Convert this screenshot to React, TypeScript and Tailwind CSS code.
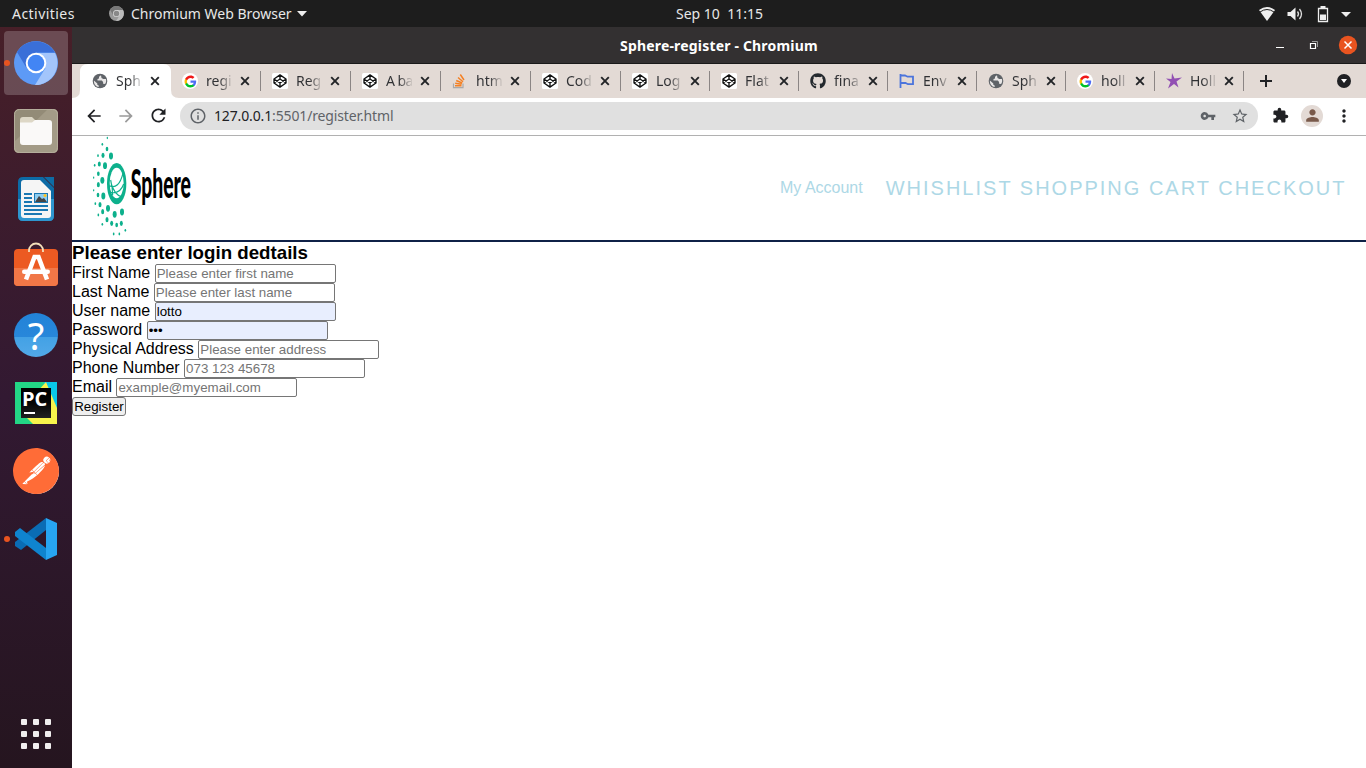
import React from "react";
import { MdArrowBack, MdArrowForward, MdRefresh, MdInfoOutline, MdVpnKey, MdStarBorder, MdExtension, MdPerson, MdMoreVert, MdAdd } from "react-icons/md";
import { FaGithub } from "react-icons/fa";
import { SiPostman } from "react-icons/si";

const ui = "font-['Noto_Sans','Liberation_Sans',sans-serif]";

const Chromium = ({ size, grey }: { size: number; grey?: boolean }) => {
  const c = grey ? ["#777", "#999", "#bbb", "#888"] : ["#3a6fd8", "#5d9af6", "#a3c5fb", "#4285f4"];
  return (
    <svg width={size} height={size} viewBox="0 0 44 44">
      <circle cx="22" cy="22" r="22" fill={c[1]} />
      <path d="M3 11A22 22 0 0 1 41 11.5H22L12.5 27Z" fill={c[0]} />
      <path d="M22 12H41A22 22 0 0 1 21 44L31.5 27Z" fill={c[2]} />
      <circle cx="22" cy="22" r="10.3" fill={grey ? "#ddd" : "#fff"} />
      <circle cx="22" cy="22" r="8.3" fill={c[3]} />
    </svg>
  );
};

const Google = () => (
  <span className="flex size-4 items-center justify-center rounded-full bg-white">
    <svg width="13" height="13" viewBox="0 0 24 24">
      <path fill="#4e6cf5" d="M22.5 12.2c0-.8-.1-1.500-.2-2.200H12v4.300h5.900c-.3 1.400-1 2.500-2.200 3.300v2.800h3.600c2-1.900 3.200-4.700 3.200-8.200z" />
      <path fill="#00c12b" d="M12 23c3 0 5.500-1 7.300-2.700l-3.600-2.800c-1 .7-2.200 1.100-3.700 1.100-2.900 0-5.300-1.900-6.200-4.500H2.200v2.800C4 20.500 7.700 23 12 23z" />
      <path fill="#fbbc05" d="M5.800 14.100c-.2-.7-.4-1.400-.4-2.100s.1-1.400.4-2.100V7.100H2.200C1.400 8.600 1 10.200 1 12s.4 3.400 1.200 4.900z" />
      <path fill="#f01818" d="M12 5.400c1.600 0 3.100.6 4.200 1.600l3.200-3.200C17.500 2.100 15 1 12 1 7.700 1 4 3.500 2.200 7.100l3.600 2.800C6.700 7.300 9.100 5.400 12 5.400z" />
    </svg>
  </span>
);

const Codepen = () => (
  <svg width="16" height="16" viewBox="0 0 16 16" fill="none" stroke="#111" strokeWidth="1.350" strokeLinejoin="round">
    <rect width="16" height="16" rx="1.500" fill="#fff" stroke="none" />
    <path d="M8 1.900 14 6v4l-6 4.100L2 10V6zM8 1.900V6M8 10v4.100M2 6l6 4 6-4M2 10l6-4 6 4" />
  </svg>
);

const Stack = () => (
  <svg width="16" height="16" viewBox="0 0 16 16" fill="none">
    <path d="M1.500 10.500v4.200h9.500v-4.200" stroke="#a9a9a9" strokeWidth="1.200" />
    <path d="M3 12.700h6.500M3.200 10.200l6.400 1M4.200 7.500l6 2.500M6 4.500l5 4.200M8.300 1.500l3.700 5.500" stroke="#f48024" strokeWidth="1.500" />
  </svg>
);

const Flag = () => (
  <svg width="16" height="16" viewBox="0 0 16 16" fill="none" stroke="#4b74dc" strokeWidth="1.800">
    <path d="M1.500 1v14M1.500 2.500h4.500l2.500 1.200h5.500v7.500h-5l-2.500-1.200h-5" />
  </svg>
);

const Star = () => (
  <svg width="16" height="16" viewBox="0 0 16 16" fill="#9250b3">
    <path d="M6 0 8.500 5.500 16 4.500 10.500 8.500 12.500 14.500 8 11 2 15.500 4.500 9 0 5.500 5.500 6z" />
  </svg>
);

const Globe = () => (
  <svg width="16" height="16" viewBox="0 0 16 16">
    <circle cx="8" cy="8" r="7.300" fill="#5f6368" />
    <path d="M9 2.300 7 3.700v1.800L5.500 6v1.600h4.300l1.300 1.500v1.600l2 .2c1.200-1.500 1.300-3.400.8-5L11.300 6 9.500 4.900zM1.900 7.400l3.400 3.100v1.300l1.400.7v1.400C4 13.600 1.700 11.300 1.900 7.400z" fill="#e8e6e6" />
  </svg>
);

const tabs: { t: string; icon: React.ReactNode }[] = [
  { t: "Sph", icon: <Globe /> },
  { t: "regi", icon: <Google /> },
  { t: "Reg", icon: <Codepen /> },
  { t: "A ba", icon: <Codepen /> },
  { t: "htm", icon: <Stack /> },
  { t: "Cod", icon: <Codepen /> },
  { t: "Log", icon: <Codepen /> },
  { t: "Flat", icon: <Codepen /> },
  { t: "fina", icon: <FaGithub className="size-4 text-[#24292e]" /> },
  { t: "Env", icon: <Flag /> },
  { t: "Sph", icon: <Globe /> },
  { t: "holl", icon: <Google /> },
  { t: "Holl", icon: <Star /> },
];

const Tab = ({ t, icon, i }: { t: string; icon: React.ReactNode; i: number }) => (
  <div className={`relative flex h-[34px] shrink-0 items-center pl-3 ${i < 6 ? "w-[90px]" : "w-[89px]"}`}>
    {i === 0 && (
      <svg className="absolute -left-2 top-0" width="108" height="34">
        <path d="M0 34Q8 34 8 26V8Q8 0 16 0H91Q99 0 99 8V26Q99 34 107 34Z" fill="#fff" />
      </svg>
    )}
    <span className="relative flex size-4 items-center justify-center">{icon}</span>
    <span className={`relative ml-2 w-[26px] overflow-hidden whitespace-nowrap bg-gradient-to-r from-[#303134] from-50% to-[#303134]/10 bg-clip-text text-[14px] leading-5 text-transparent ${t === "A ba" ? "tracking-[-0.6px]" : ""}`}>{t}</span>
    <svg className="relative ml-[8px]" width="10" height="10" viewBox="0 0 10 10" stroke="#222427" strokeWidth="1.900">
      <path d="m1.200 1.200 7.600 7.600m0-7.600-7.600 7.600" />
    </svg>
    {i > 0 && <span className="absolute -right-px top-[7px] h-[20px] w-px bg-[#8b8584]" />}
  </div>
);

const Files = () => (
  <svg width="46" height="46" viewBox="0 0 46 46">
    <rect x="1" y="1" width="44" height="44" rx="5" fill="#938b77" />
    <path d="M1 34 35 1h5q5 0 5 5v34q0 5-5 5H6q-5 0-5-5z" fill="#a39b87" />
    <rect x="1.500" y="1.500" width="43" height="43" rx="5" fill="none" stroke="#b5ae9c" />
    <path d="M7 12q0-3 3-3h9l3 3v8H7z" fill="#ddd7c6" />
    <path d="M7 14.500h12l3-2.500h14q3 0 3 3v19q0 3-3 3H10q-3 0-3-3z" fill="#faf9f8" />
  </svg>
);

const Writer = () => (
  <svg width="38" height="46" viewBox="0 0 38 46">
    <path d="M6 1h20l11 11v28q0 5-5 5H6q-5 0-5-5V6q0-5 5-5z" fill="#0c6ba6" />
    <path d="M1 23h36v17q0 5-5 5H6q-5 0-5-5z" fill="#2e96cf" />
    <path d="M27 1h10v10z" fill="#0e6ca5" />
    <path d="M7 4h16l11 11v24q0 3-3 3H7q-3 0-3-3V7q0-3 3-3z" fill="#f5f5f5" />
    <path d="M7 18h8M7 22h8M7 26h8M7 30h24M7 34h24M7 38h18" stroke="#1a78b3" strokeWidth="2" />
    <path d="M17 17h14v10H17z" fill="#1a78b3" />
    <path d="M18 18h12v8H18z" fill="#8ecdf0" />
    <path d="m18 26 4-6 3 3 2-1 3 4z" fill="#444" />
    <circle cx="28" cy="19.500" r="1.500" fill="#ffc21a" />
  </svg>
);

const Software = () => (
  <svg className="-mt-[6px]" width="46" height="46" viewBox="0 0 46 46">
    <rect x="1" y="8" width="44" height="37" rx="4" fill="#ec5a22" />
    <path d="M1 27h44v14q0 4-4 4H5q-4 0-4-4z" fill="#f17747" />
    <path d="M16 11V9.500a7 7 0 0 1 14 0V11" fill="none" stroke="#f3dfba" strokeWidth="1.800" />
    <path d="M13 38.500 21.500 16h4L34 38.500" fill="none" stroke="#fff" strokeWidth="4.500" />
    <rect x="9" y="28.500" width="28" height="4.500" rx="2.200" fill="#fff" />
  </svg>
);

const Help = () => (
  <span className="flex size-11 items-center justify-center rounded-full bg-[linear-gradient(#2283d8_0%,#2887da_55%,#43a1e5_55%,#52a9e8_100%)] text-[38px] leading-none text-white">?</span>
);

const PyCharm = () => (
  <span className="relative flex size-[42px] items-center justify-center">
    <svg className="absolute inset-0" width="42" height="42" viewBox="0 0 42 42">
      <path d="M0 0h42v42H0z" fill="#23d686" />
      <path d="M29 0h13v34L28 12z" fill="#09c8e8" />
      <path d="M31 0 42 26v16H10l10-30z" fill="#f8f44c" />
      <path d="M0 42 6 30l12 12z" fill="#23d686" />
    </svg>
    <span className="relative flex size-[30px] flex-col bg-gradient-to-b from-black to-[#222] pl-[1px]">
      <span className="h-[20px] font-['Open_Sans',sans-serif] text-[20px] font-bold leading-[21px] text-white">PC</span>
      <span className="ml-[2px] mt-[4px] h-[2px] w-[11px] bg-white" />
    </span>
  </span>
);

const Code = () => (
  <svg width="42" height="42" viewBox="0 0 42 42">
    <path d="M31 0v12L6 32 0 28v-4z" fill="#0a6cb4" />
    <path d="M5 10 0 14v4l31 24V30z" fill="#0f84cf" />
    <path d="M31 0 42 5v32l-11 5z" fill="#27a5f2" />
  </svg>
);

const dock = [<Chromium size={44} />, <Files />, <Writer />, <Software />, <Help />, <PyCharm />,
  <span className="flex size-[45px] items-center justify-center rounded-full bg-white"><SiPostman className="size-[46px] shrink-0 text-[#ff6c37]" /></span>, <Code />];

const dots = [
  [106, 12, 2], [91, 31, 2.5], [105, 45, 4], [78, 65, 2.5], [68, 94, 2.5], [93, 64, 4.5], [117, 66, 6], [82, 90, 4.5], [99, 95, 6],
  [79, 119, 4], [65, 131, 2], [91, 139, 6], [79, 152, 4.5], [65, 169, 2], [78, 183, 4], [94, 186, 6], [70, 209, 2.5],
  [84, 212, 4.5], [108, 223, 6], [79, 243, 2.5], [92, 233, 4.5], [128, 241, 6], [150, 234, 6], [105, 257, 4.5], [91, 271, 2.5],
  [119, 268, 4.5], [134, 273, 4], [148, 268, 4.5], [160, 289, 2.5], [125, 300, 2.5], [142, 300, 2.5],
];

const Logo = () => (
  <svg width="150" height="104" viewBox="0 6 450 312">
    {dots.map(([x, y, r], i) => <ellipse key={i} cx={x} cy={y} rx={r} ry={r * 1.7} fill="#0db08c" />)}
    <ellipse cx="134" cy="149" rx="29" ry="62" fill="#0db08c" />
    <ellipse cx="134" cy="147" rx="21" ry="46" fill="#fff" />
    <path d="M112 155Q140 168 153 118M114 175Q144 182 155 150M118 150Q128 182 148 188M116 138Q122 165 122 184" fill="none" stroke="#0db08c" strokeWidth="3.500" />
    <text x="176" y="193" textLength="181" lengthAdjust="spacingAndGlyphs" className="font-['Lato',sans-serif] text-[118px] font-black">Sphere</text>
  </svg>
);

const fields = [
  { l: "First Name", p: "Please enter first name" },
  { l: "Last Name", p: "Please enter last name" },
  { l: "User name", v: "lotto" },
  { l: "Password", v: "abc", pw: true },
  { l: "Physical Address", p: "Please enter address" },
  { l: "Phone Number", p: "073 123 45678" },
  { l: "Email", p: "example@myemail.com" },
];

export default function App() {
  return (
    <div className={`flex h-[768px] w-[1366px] flex-col overflow-hidden bg-white ${ui}`}>
      <div className="flex h-[27px] shrink-0 items-center bg-[#1d1d1d] text-[14px] text-[#e8e8e8]">
        <span className="ml-3 w-[97px] tracking-[0.450px]">Activities</span>
        <Chromium size={15} grey />
        <span className="ml-[7px] w-[161px] whitespace-nowrap">Chromium Web Browser</span>
        <svg className="ml-[5px]" width="10" height="6"><path d="M0 0h10L5 5.500z" fill="#eee" /></svg>
        <span className="ml-[369px] w-[88px] whitespace-pre">Sep 10  11:15</span>
        <svg className="ml-auto mr-[15px]" width="92" height="20" viewBox="0 0 92 20">
          <path d="M0 6q8-6 16 0l-8 11z" fill="#eee" />
          <path d="M1 8q7-5 14 0" fill="none" stroke="#1d1d1d" />
          <path d="M28.500 8h3l5-4.500v13l-5-4.500h-3z" fill="#eee" />
          <path d="M38.500 7.500q2 2.500 0 5M40.500 5q4 5 0 10" fill="none" stroke="#ddd" strokeWidth="1.300" />
          <path d="M59.500 4.500h9v13h-9z" fill="none" stroke="#eee" strokeWidth="1.300" />
          <path d="M61.500 2h5v2h-5zM61 10.500h6v5.500h-6z" fill="#eee" />
          <path d="M82 8h10l-5 5z" fill="#eee" />
        </svg>
      </div>
      <div className="flex min-h-0 flex-1">
        <div className="flex w-[72px] shrink-0 flex-col items-center gap-1 bg-[linear-gradient(#471f28,#321932_50%,#25151f)] pt-1">
          {dock.map((d, i) => (
            <div key={i} className={`relative flex size-16 items-center justify-center rounded ${i === 0 ? "bg-white/20" : ""}`}>
              {d}
              {(i === 0 || i === 7) && <span className="absolute left-0 top-[29px] size-[6px] rounded-full bg-[#e95420]" />}
            </div>
          ))}
          <div className="mb-[19px] mt-auto grid grid-cols-3 gap-[6px]">
            {Array.from({ length: 9 }, (_, i) => <span key={i} className="size-[6px] rounded-[1px] bg-[#f0eeee]" />)}
          </div>
        </div>
        <div className="flex min-w-0 flex-1 flex-col">
          <div className="flex h-[37px] shrink-0 items-center border-b border-[#191919] bg-[#333031] text-[14px] font-bold text-white">
            <span className="ml-[548px] w-[198px] whitespace-nowrap tracking-[0.180px]">Sphere-register - Chromium</span>
            <svg className="ml-auto mr-2" width="90" height="20" viewBox="0 0 90 20" fill="none" stroke="#fff">
              <path d="M8 12.500h8" />
              <path d="M42.500 8.500h5v5h-5z" strokeWidth="1.200" />
              <path d="M44 6.500h5.500V12" stroke="#999" />
              <circle cx="80" cy="10" r="9.200" fill="#e95420" stroke="none" />
              <path d="m76.500 6.500 7 7m0-7-7 7" strokeWidth="1.500" />
            </svg>
          </div>
          <div className="flex h-[34px] shrink-0 bg-[#e3dad5] pl-2">
            {tabs.map((t, i) => <Tab key={i} {...t} i={i} />)}
            <svg className="ml-[17px] mt-[11px]" width="12" height="12" stroke="#202124" strokeWidth="2"><path d="M0 6h12M6 0v12" /></svg>
            <span className="ml-auto mr-[15px] mt-[10px] flex size-[14px] items-center justify-center rounded-full bg-[#202124]">
              <svg width="6" height="4"><path d="M0 0h6L3 4z" fill="#fff" /></svg>
            </span>
          </div>
          <div className="flex h-[38px] shrink-0 items-center border-b border-[#b1b1b1] bg-white pb-[2px] pl-3">
            <MdArrowBack className="size-5 text-[#202124]" />
            <MdArrowForward className="ml-3 size-5 text-[#9b9b9b]" />
            <MdRefresh className="ml-3 size-[21px] text-[#202124]" />
            <div className="ml-[11px] flex h-7 w-[1078px] items-center rounded-full bg-[#e0e0e0]">
              <MdInfoOutline className="ml-[9px] size-[18px] text-[#5f6368]" />
              <span className="ml-[7px] text-[14px] tracking-[-0.140px] text-[#5f6368]"><span className="text-[#202124]">127.0.0.1</span>:5501/register.html</span>
              <MdVpnKey className="ml-auto size-4 text-[#5f6368]" />
              <MdStarBorder className="ml-[15px] mr-[9px] size-[18px] text-[#5f6368]" />
            </div>
            <MdExtension className="ml-[14px] size-[17px] text-[#202124]" />
            <span className="ml-[12px] flex size-[22px] items-center justify-center rounded-full bg-[#e3dad5]"><MdPerson className="size-[19px] text-[#795a4b]" /></span>
            <MdMoreVert className="ml-[11px] size-5 text-[#202124]" />
          </div>
          <div className="flex h-[106px] shrink-0 items-center border-b-2 border-[#0f2147] bg-white font-['Liberation_Sans',Arial,sans-serif] text-[#add8e6]">
            <Logo />
            <span className="ml-[558px] text-base">My Account</span>
            <span className="ml-[23px] whitespace-nowrap text-[20px] tracking-[2px]">WHISHLIST SHOPPING CART CHECKOUT</span>
          </div>
          <form className="flex flex-col items-start font-['Liberation_Sans',Arial,sans-serif] text-black">
            <h3 className="h-[22px] text-[18.720px] font-bold leading-[22px]">Please enter login dedtails</h3>
            {fields.map((f) => (
              <label key={f.l} className="flex h-[19px] text-base leading-[17px]">
                {f.l}
                <input
                  type={f.pw ? "password" : "text"}
                  placeholder={f.p}
                  defaultValue={f.v}
                  className={`ml-[4.440px] h-[19px] w-[181px] rounded-[2px] border border-[#767676] px-[1px] text-[13.333px] leading-[15px] placeholder:text-[#757575] ${f.v ? "bg-[#e8eefe]" : "bg-white"}`}
                />
              </label>
            ))}
            <button type="button" className="h-[19px] w-[54px] rounded-[3px] border border-[#767676] bg-[#efefef] text-[13.333px] leading-[16px]">Register</button>
          </form>
        </div>
      </div>
    </div>
  );
}
